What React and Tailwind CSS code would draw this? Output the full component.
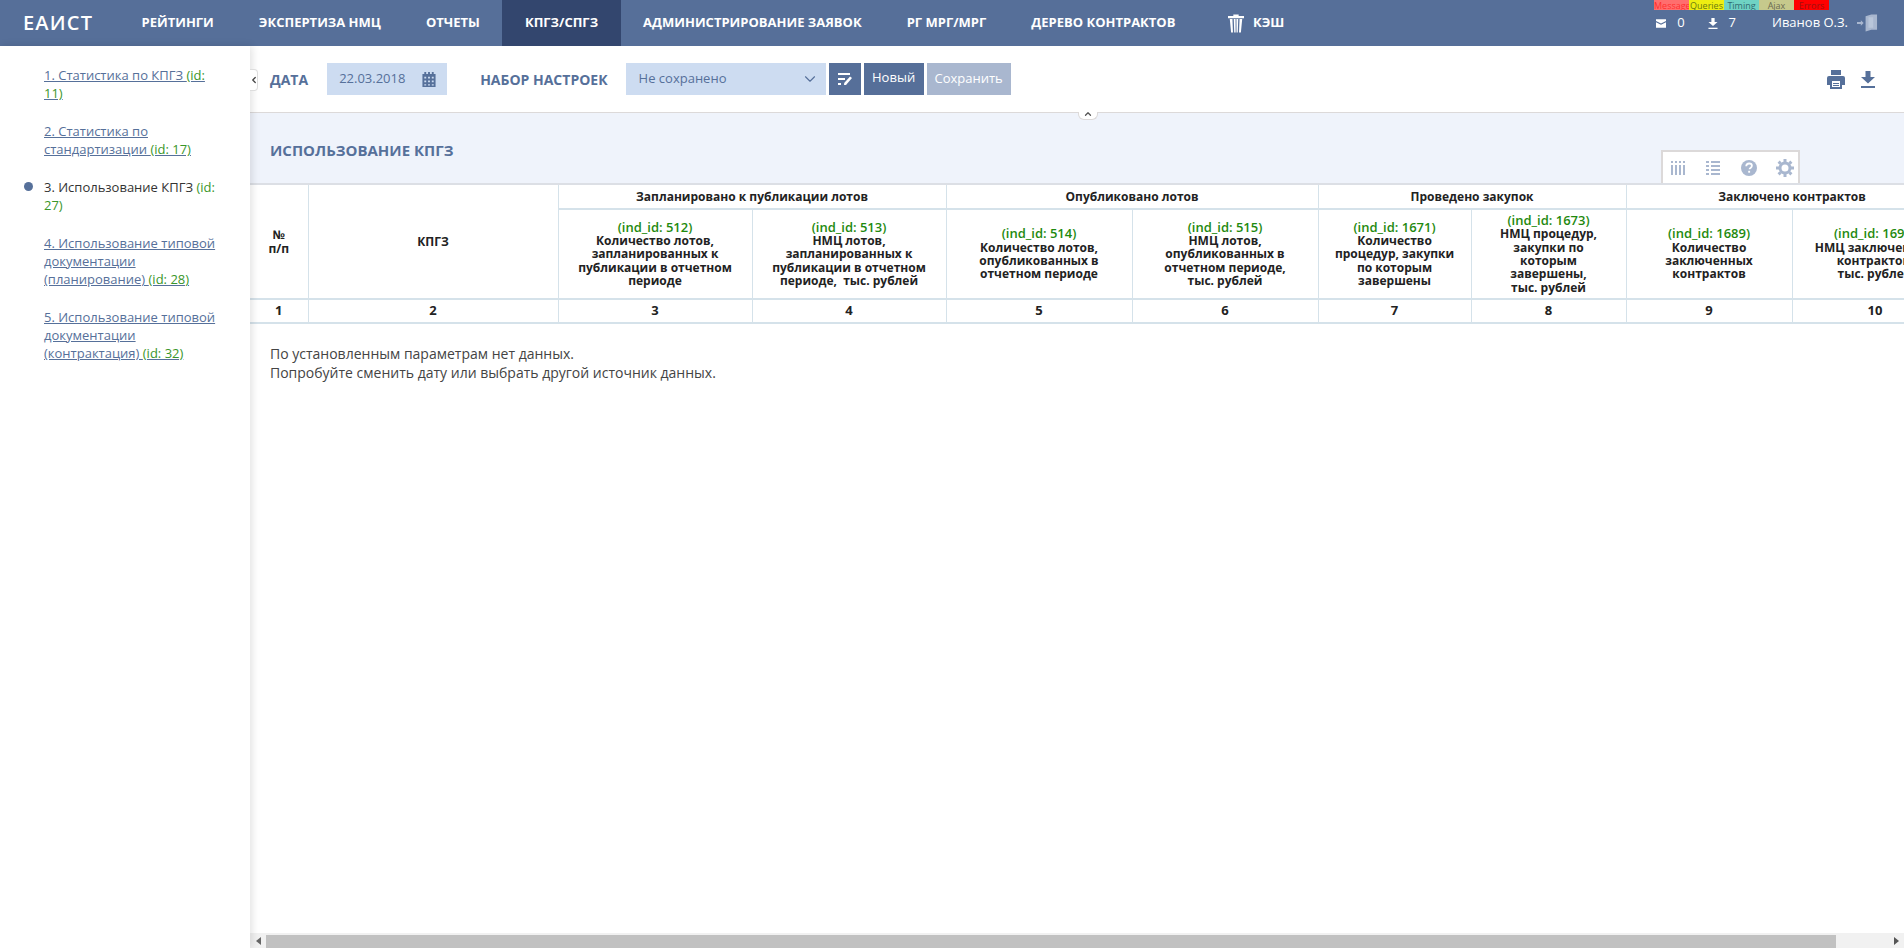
import { ChevronDown, ChevronLeft, ChevronUp } from 'lucide-react'

const navItems = ['Рейтинги', 'Экспертиза НМЦ', 'Отчеты', 'КПГЗ/СПГЗ', 'Администрирование заявок', 'РГ МРГ/МРГ', 'Дерево контрактов']

const debugItems = [
  { label: 'Messages', className: 'bg-[#ff6e6e] text-[#ff2f2f]' },
  { label: 'Queries', className: 'bg-[#eeee11] text-[#6a7a10]' },
  { label: 'Timing', className: 'bg-[#6fd3c4] text-[#2f6a70]' },
  { label: 'Ajax', className: 'bg-[#c6c98c] text-[#6a6a50]' },
  { label: 'Errors', className: 'bg-[#ff0000] text-[#a01010]' },
]

const sideItems = [
  { title: '1. Статистика по КПГЗ ', id: '(id: 11)' },
  { title: '2. Статистика по стандартизации ', id: '(id: 17)' },
  { title: '3. Использование КПГЗ ', id: '(id: 27)', active: true },
  { title: '4. Использование типовой документации (планирование) ', id: '(id: 28)' },
  { title: '5. Использование типовой документации (контрактация) ', id: '(id: 32)' },
]

const groups = ['Запланировано к публикации лотов', 'Опубликовано лотов', 'Проведено закупок', 'Заключено контрактов']

const indicators = [
  { id: 512, text: 'Количество лотов,\nзапланированных к\nпубликации в отчетном\nпериоде' },
  { id: 513, text: 'НМЦ лотов,\nзапланированных к\nпубликации в отчетном\nпериоде,\u00a0 тыс. рублей' },
  { id: 514, text: 'Количество лотов,\nопубликованных в\nотчетном периоде' },
  { id: 515, text: 'НМЦ лотов,\nопубликованных в\nотчетном периоде,\nтыс. рублей' },
  { id: 1671, text: 'Количество\nпроцедур, закупки\nпо которым\nзавершены' },
  { id: 1673, text: 'НМЦ процедур,\nзакупки по\nкоторым\nзавершены,\nтыс. рублей' },
  { id: 1689, text: 'Количество\nзаключенных\nконтрактов' },
  { id: 1690, text: 'НМЦ заключенных\nконтрактов,\nтыс. рублей' },
]

const colWidths = [58, 250, 194, 194, 186, 186, 153, 155, 166, 166]

function MailIcon({ className }) {
  return (
    <svg viewBox="0 0 12 10" className={className} fill="currentColor">
      <path d="M0 0h12v2L6 5 0 2z" />
      <path d="M0 3.5l6 3 6-3V10H0z" />
    </svg>
  )
}

function DownloadIcon({ className }) {
  return (
    <svg viewBox="0 0 14 17" className={className} fill="currentColor">
      <path d="M4.5 0h5v6H14L7 12.5 0 6h4.5z" />
      <rect x="0" y="15" width="14" height="2" />
    </svg>
  )
}

function ExitIcon({ className }) {
  return (
    <svg viewBox="0 0 22 18" className={className} fill="currentColor">
      <path d="M0 8h4V6l3 3-3 3v-2H0z" />
      <path d="M9 2l6-2h6v16h-6l-6 2z" />
      <rect x="12" y="3" width="5" height="11" fill="#b9c6da" />
    </svg>
  )
}

function TrashIcon({ className }) {
  return (
    <svg viewBox="0 0 18 20" className={className} fill="currentColor">
      <path d="M6 0h6v1.500h6V4H0V1.500h6z" />
      <path d="M2 5h3l.6 15H3.500zM6.500 5h2l.1 15H7zM9.500 5h2L11 20H9.600zM13 5h3l-1.500 15h-2.100z" />
    </svg>
  )
}

function CalendarIcon({ className }) {
  return (
    <svg viewBox="0 0 14 16" className={className} fill="currentColor">
      <path d="M2 0h2v2h2V0h2v2h2V0h2v2h2v14H0V2h2z" />
      <path fill="#cddcf1" d="M2 5h2v2H2zM6 5h2v2H6zM10 5h2v2h-2zM2 9h2v2H2zM6 9h2v2H6zM10 9h2v2h-2zM2 13h2v1.500H2zM6 13h2v1.500H6zM10 13h2v1.500h-2z" />
    </svg>
  )
}

function FilterEditIcon({ className }) {
  return (
    <svg viewBox="0 0 14 12" className={className} fill="currentColor">
      <rect x="0" y="0" width="12" height="2" />
      <rect x="0" y="5" width="7" height="2" />
      <rect x="0" y="10" width="3" height="2" />
      <path d="M12 3.500l2 1.500-6 7H6l.2-2z" />
    </svg>
  )
}

function PrintIcon({ className }) {
  return (
    <svg viewBox="0 0 18 19" className={className} fill="currentColor">
      <path d="M4 0h10v5H4z" />
      <path d="M2 6h14a2 2 0 0 1 2 2v7h-3v4H3v-4H0V8a2 2 0 0 1 2-2z" />
      <rect x="5" y="11" width="8" height="6" fill="#fff" />
      <rect x="6" y="13" width="6" height="1" />
      <rect x="6" y="15" width="6" height="1" />
    </svg>
  )
}

function ColumnsIcon({ className }) {
  return (
    <svg viewBox="0 0 14 14" className={className} fill="currentColor">
      <path d="M0 0h2v2H0zM4 0h2v2H4zM8 0h2v2H8zM12 0h2v2h-2z" />
      <path d="M0 4h2v10H0zM4 4h2v10H4zM8 4h2v10H8zM12 4h2v10h-2z" />
    </svg>
  )
}

function ListIcon({ className }) {
  return (
    <svg viewBox="0 0 14 14" className={className} fill="currentColor">
      <path d="M0 0h3v2H0zM5 0h9v2H5zM0 4h3v2H0zM5 4h9v2H5zM0 8h3v2H0zM5 8h9v2H5zM0 12h3v2H0zM5 12h9v2H5z" />
    </svg>
  )
}

function HelpIcon({ className }) {
  return (
    <svg viewBox="0 0 16 16" className={className}>
      <circle cx="8" cy="8" r="8" fill="currentColor" />
      <path d="M5.200 6.200C5.300 4.500 6.500 3.500 8.100 3.500c1.600 0 2.800 1 2.800 2.300 0 1.200-.8 1.700-1.500 2.200-.6.400-.8.700-.8 1.300" fill="none" stroke="#fff" strokeWidth="1.800" />
      <rect x="7.200" y="10.800" width="1.900" height="1.900" fill="#fff" />
    </svg>
  )
}

function GearIcon({ className }) {
  return (
    <svg viewBox="0 0 18 18" className={className}>
      <circle cx="9" cy="9" r="5" fill="none" stroke="currentColor" strokeWidth="3" />
      <g stroke="currentColor" strokeWidth="3">
        <path d="M9 0v3M9 15v3M0 9h3M15 9h3M2.600 2.600l2.100 2.100M13.300 13.300l2.100 2.100M2.600 15.400l2.100-2.100M13.300 4.700l2.100-2.100" />
      </g>
    </svg>
  )
}

function Header() {
  return (
    <header className="relative flex h-[46px] shrink-0 items-center bg-[#566f99] text-white">
      <div className="w-[119px] shrink-0 pl-[23px] text-[20px] font-semibold tracking-[1.2px]">ЕАИСТ</div>
      <nav className="flex h-full items-center text-[13px] font-bold uppercase">
        {navItems.map((item) => (
          <a
            key={item}
            className={`flex h-full items-center px-[22.5px] ${item === 'КПГЗ/СПГЗ' ? 'bg-[#33466e]' : ''}`}
          >
            {item}
          </a>
        ))}
        <a className="ml-[30px] flex h-full items-center gap-[9px]">
          <TrashIcon className="h-[19px] w-[16px]" />
          КЭШ
        </a>
      </nav>
      <div className="absolute top-0 left-[1654px] flex h-[10px]">
        {debugItems.map((item) => (
          <span key={item.label} className={`w-[35px] overflow-hidden text-center text-[9px] leading-[12px] ${item.className}`}>
            {item.label}
          </span>
        ))}
      </div>
      <div className="ml-auto flex items-center pr-[26px] text-[13px]">
        <MailIcon className="h-[9px] w-[10px]" />
        <span className="ml-[11px]">0</span>
        <DownloadIcon className="ml-[23px] h-[11px] w-[10px]" />
        <span className="ml-[11px]">7</span>
        <span className="ml-[36px]">Иванов О.З.</span>
        <ExitIcon className="ml-[9px] h-[18px] w-[21px] text-[#a9b7cf]" />
      </div>
    </header>
  )
}

function Sidebar() {
  return (
    <aside className="relative z-20 w-[250px] shrink-0 bg-white pt-[20px] pr-[34px] pl-[44px] shadow-[2px_0_8px_rgba(0,0,0,0.12)]">
      <ul className="flex flex-col gap-[20px] text-[13px] leading-[18px]">
        {sideItems.map((item) => (
          <li key={item.id} className="relative">
            {item.active && <span className="absolute top-[4px] left-[-20px] h-[9px] w-[9px] rounded-full bg-[#56709a]" />}
            {item.active ? (
              <span className="text-[#333]">
                {item.title}
                <span className="text-[#3a962a]">{item.id}</span>
              </span>
            ) : (
              <a className="text-[#56709a] underline">
                {item.title}
                <span className="text-[#3a962a]">{item.id}</span>
              </a>
            )}
          </li>
        ))}
      </ul>
      <button className="absolute top-[23px] right-[-8px] flex h-[22px] w-[8px] items-center justify-center rounded-r-[4px] border border-l-0 border-[#ddd] bg-white text-[#444]">
        <ChevronLeft size={10} strokeWidth={3} className="shrink-0" />
      </button>
    </aside>
  )
}

function Toolbar() {
  return (
    <div className="relative z-10 flex h-[67px] shrink-0 items-center border-b border-[#dcd9d9] pl-[20px] text-[#56709a]">
      <span className="text-[14px] font-bold">ДАТА</span>
      <div className="ml-[19px] flex h-[32px] w-[120px] items-center justify-between bg-[#cddcf1] pr-[11px] pl-[12px] text-[13px]">
        22.03.2018
        <CalendarIcon className="h-[15px] w-[14px]" />
      </div>
      <span className="ml-[33px] text-[14px] font-bold">НАБОР НАСТРОЕК</span>
      <div className="ml-[18px] flex h-[32px] w-[200px] items-center justify-between bg-[#cddcf1] pr-[7px] pl-[13px] text-[13px]">
        Не сохранено
        <ChevronDown size={18} strokeWidth={1.5} />
      </div>
      <button className="ml-[3px] flex h-[32px] w-[32px] items-center justify-center bg-[#566f99] text-white">
        <FilterEditIcon className="h-[12px] w-[14px]" />
      </button>
      <button className="ml-[3px] h-[32px] w-[60px] bg-[#566f99] pb-[2px] text-[13px] text-white">Новый</button>
      <button className="ml-[3px] h-[32px] w-[84px] bg-[#a9b7cf] text-[13px] text-white">Сохранить</button>
      <div className="ml-auto flex items-center gap-[16px] pr-[29px]">
        <PrintIcon className="h-[19px] w-[18px]" />
        <DownloadIcon className="h-[17px] w-[14px]" />
      </div>
      <button className="absolute right-[806px] bottom-[-8px] flex h-[8px] w-[20px] items-start justify-center rounded-b-[6px] border border-t-0 border-[#dcd9d9] bg-white text-[#555]">
        <ChevronUp size={10} strokeWidth={3} className="mt-[-3px] shrink-0" />
      </button>
    </div>
  )
}

function TitleBand() {
  return (
    <div className="relative flex h-[70px] shrink-0 items-center bg-[#eff3fb] pt-[4px] pl-[20px]">
      <h1 className="text-[15px] font-bold text-[#56709a] uppercase">Использование КПГЗ</h1>
      <div className="absolute top-[37px] right-[104px] flex h-[33px] w-[139px] items-center gap-[21px] border-2 border-b-0 border-[#dcd9d9] bg-white pl-[8px] text-[#a9b7cf]">
        <ColumnsIcon className="h-[14px] w-[14px]" />
        <ListIcon className="h-[14px] w-[14px]" />
        <HelpIcon className="h-[16px] w-[16px]" />
        <GearIcon className="ml-[-2px] h-[18px] w-[18px]" />
      </div>
    </div>
  )
}

function DataTable() {
  return (
    <div className="overflow-hidden">
      <table className="w-[1708px] table-fixed border-collapse border-t-2 border-[#dcdfe5] text-[12px] font-bold text-[#222]">
        <colgroup>
          {colWidths.map((w, i) => (
            <col key={i} style={{ width: w }} />
          ))}
        </colgroup>
        <thead>
          <tr className="h-[25px]">
            <th rowSpan={2} className="border-r border-b-2 border-[#d5e2ea] leading-[14px]">
              №<br />п/п
            </th>
            <th rowSpan={2} className="border-x border-b-2 border-[#d5e2ea]">КПГЗ</th>
            {groups.map((g) => (
              <th key={g} colSpan={2} className="border-x border-b-2 border-[#d5e2ea]">
                {g}
              </th>
            ))}
          </tr>
          <tr className="h-[90px]">
            {indicators.map((ind) => (
              <th key={ind.id} className="border-x border-b-2 border-[#d5e2ea] px-[4px] leading-[13.3px] whitespace-pre-line">
                <span className="text-[13px] font-semibold text-[#1f8a0f]">(ind_id: {ind.id})</span>
                <br />
                {ind.text}
              </th>
            ))}
          </tr>
        </thead>
        <tbody>
          <tr className="h-[24px]">
            {colWidths.map((_, i) => (
              <td key={i} className="border-x border-b-2 border-[#d5e2ea] text-center text-[13px] first:border-l-0">
                {i + 1}
              </td>
            ))}
          </tr>
        </tbody>
      </table>
    </div>
  )
}

function Scrollbar() {
  return (
    <div className="flex h-[15px] shrink-0 items-end bg-[#f1f1f1] text-[#555]">
      <div className="flex h-full w-[16px] items-center justify-center">
        <span className="h-0 w-0 border-y-[4px] border-r-[5px] border-y-transparent border-r-[#666]" />
      </div>
      <div className="h-[13px] w-[1570px] bg-[#c1c1c1]" />
      <div className="ml-auto flex h-full w-[16px] items-center justify-center">
        <span className="h-0 w-0 border-y-[4px] border-l-[5px] border-y-transparent border-l-[#555]" />
      </div>
    </div>
  )
}

export default function App() {
  return (
    <div className="flex h-screen flex-col overflow-hidden bg-white font-['Open_Sans',sans-serif]">
      <Header />
      <div className="flex min-h-0 flex-1">
        <Sidebar />
        <main className="flex min-w-0 flex-1 flex-col">
          <Toolbar />
          <TitleBand />
          <DataTable />
          <div className="flex-1 pt-[20px] pl-[20px] text-[14px] leading-[19px] text-[#444]">
            <p>По установленным параметрам нет данных.</p>
            <p>Попробуйте сменить дату или выбрать другой источник данных.</p>
          </div>
          <Scrollbar />
        </main>
      </div>
    </div>
  )
}
